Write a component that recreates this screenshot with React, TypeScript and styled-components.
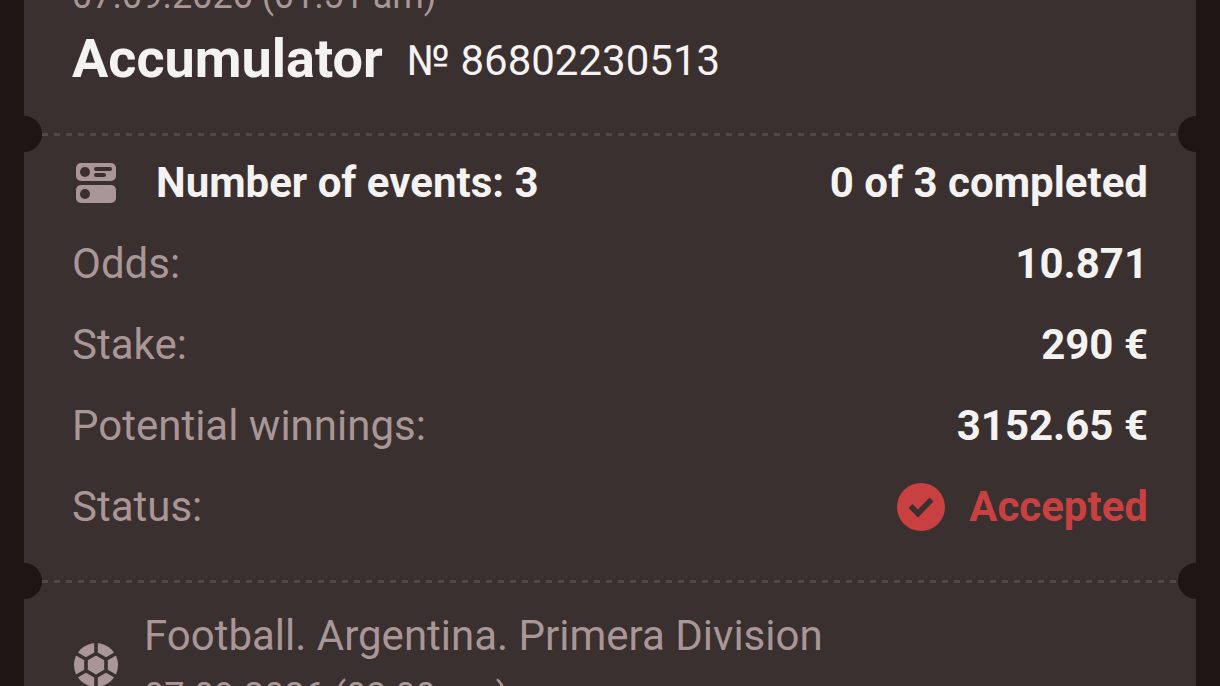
import React from "react";
import styled, { createGlobalStyle } from "styled-components";

const GlobalStyle = createGlobalStyle`
  * { box-sizing: border-box; }
  body {
    margin: 0;
    background: #1f1614;
    color: #f5f2f2;
    font: 400 42px/54px Roboto, sans-serif;
  }
`;

const Page = styled.main`
  height: 100vh;
  overflow: hidden;
  padding: 0 24px;
`;

const Ticket = styled.article`
  margin-top: -29px;
  background: #3a302f;
`;

const Section = styled.section<{ $top?: number; $bottom?: number }>`
  padding: ${(p) => p.$top ?? 0}px 48px ${(p) => p.$bottom ?? 0}px;
`;

const DateText = styled.div`
  font-size: 36px;
  line-height: 50px;
  color: #a99696;
`;

const TitleLine = styled.div`
  display: flex;
  align-items: center;
  gap: 24px;
`;

const Title = styled.h1`
  margin: 0;
  font-size: 54px;
  line-height: 76px;
  font-weight: 700;
`;

const TicketNumber = styled.span`
  padding-top: 4px;
`;

const Divider = styled.div`
  display: flex;
  align-items: center;
  justify-content: space-between;
  height: 36px;
  overflow: hidden;
`;

const Notch = styled.span<{ $side: "left" | "right" }>`
  width: 18px;
  height: 36px;
  background: #1f1614;
  border-radius: ${(p) => (p.$side === "left" ? "0 18px 18px 0" : "18px 0 0 18px")};
`;

const Dashes = styled.span`
  flex: 1;
  height: 3px;
  background: repeating-linear-gradient(90deg, #524847 0 6px, transparent 6px 12px);
`;

const Summary = styled.div`
  display: flex;
  align-items: center;
  gap: 36px;
  font-weight: 700;
`;

const Completed = styled.span`
  margin-left: auto;
`;

const Details = styled.dl`
  display: grid;
  gap: 27px;
  margin: 27px 0 0;
`;

const Row = styled.div`
  display: flex;
  justify-content: space-between;
`;

const Label = styled.dt`
  color: #a99696;
`;

const Value = styled.dd<{ $accent?: boolean }>`
  display: flex;
  align-items: center;
  gap: 24px;
  margin: 0;
  font-weight: 700;
  color: ${(p) => (p.$accent ? "#c84140" : "inherit")};
`;

const EventRow = styled.div`
  display: flex;
  align-items: center;
  gap: 24px;
  color: #a99696;
`;

const EventText = styled.div`
  display: grid;
  gap: 8px;
`;

const EventsIcon = () => (
  <svg width="48" height="48" viewBox="0 0 48 48" aria-hidden="true">
    <rect x="4" y="4" width="40" height="18" rx="5" fill="#a99696" />
    <rect x="4" y="26" width="40" height="18" rx="5" fill="#a99696" />
    <g fill="#3a302f">
      <circle cx="13" cy="13" r="5" />
      <circle cx="13" cy="35" r="5" />
      <rect x="22" y="8" width="18" height="4" rx="2" />
      <rect x="22" y="14" width="12" height="4" rx="2" />
    </g>
  </svg>
);

const AcceptedIcon = () => (
  <svg width="48" height="48" viewBox="0 0 48 48" aria-hidden="true">
    <circle cx="24" cy="24" r="24" fill="#c84140" />
    <path d="M13.500 23L21 30.500L34.500 16.500" fill="none" stroke="#3a302f" strokeWidth="5.500" />
  </svg>
);

const BallIcon = () => (
  <svg width="48" height="48" viewBox="0 0 48 48" aria-hidden="true">
    <circle cx="24" cy="24" r="22" fill="#a99696" />
    <path
      d="M24 12.500L34 18.200V29.800L24 35.500L14 29.800V18.200Z M24 12.500V1 M34 18.200L44 12.500 M34 29.800L44 35.500 M24 35.500V47 M14 29.800L4 35.500 M14 18.200L4 12.500"
      fill="none"
      stroke="#3a302f"
      strokeWidth="3.600"
    />
  </svg>
);

const TearLine = () => (
  <Divider>
    <Notch $side="left" />
    <Dashes />
    <Notch $side="right" />
  </Divider>
);

const details = [
  ["Odds:", "10.871"],
  ["Stake:", "290 €"],
  ["Potential winnings:", "3152.65 €"],
];

export default function App() {
  return (
    <>
      <GlobalStyle />
      <Page>
        <Ticket>
          <Section $bottom={19}>
            <DateText>07.09.2026 (01:51 am)</DateText>
            <TitleLine>
              <Title>Accumulator</Title>
              <TicketNumber>№ 86802230513</TicketNumber>
            </TitleLine>
          </Section>
          <TearLine />
          <Section $top={4} $bottom={29}>
            <Summary>
              <EventsIcon />
              <span>Number of events: 3</span>
              <Completed>0 of 3 completed</Completed>
            </Summary>
            <Details>
              {details.map(([label, value]) => (
                <Row key={label}>
                  <Label>{label}</Label>
                  <Value>{value}</Value>
                </Row>
              ))}
              <Row>
                <Label>Status:</Label>
                <Value $accent>
                  <AcceptedIcon />
                  Accepted
                </Value>
              </Row>
            </Details>
          </Section>
          <TearLine />
          <Section $top={10} $bottom={48}>
            <EventRow>
              <BallIcon />
              <EventText>
                <div>Football. Argentina. Primera Division</div>
                <DateText>07.09.2026 (03:00 am)</DateText>
              </EventText>
            </EventRow>
          </Section>
        </Ticket>
      </Page>
    </>
  );
}
